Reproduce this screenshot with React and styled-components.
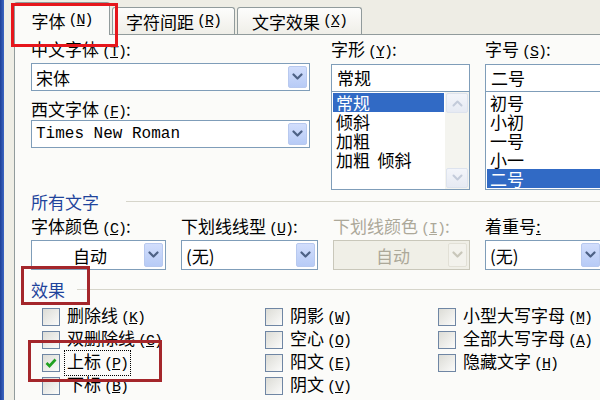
import React from 'react'
import styled, { createGlobalStyle } from 'styled-components'

const CJK = `"Noto Sans CJK SC", "Noto Sans CJK TC", sans-serif`

const GlobalStyle = createGlobalStyle`
  html, body { margin: 0; padding: 0; background: #eeede5; }
  body { font-family: ${CJK}; color: #000; }
  * { box-sizing: border-box; }
`

const Chevron = ({ up, color = '#4d6185', w = 2.2 }) => (
    <svg width="11" height="8" viewBox="0 0 11 8">
        <path d={up ? 'M1.5 6.5 L5.5 2.5 L9.5 6.5' : 'M1.5 1.5 L5.5 5.5 L9.5 1.5'}
            stroke={color} strokeWidth={w} fill="none" strokeLinecap="round" strokeLinejoin="round" />
    </svg>
)

const Mn = ({ k }) => <Key>(<u>{k}</u>)</Key>

function Combo({ value, center, mono, disabled, h = 28 }) {
    return (
        <ComboBox disabled={disabled} h={h}>
            <ComboText center={center} mono={mono} disabled={disabled}>{value}</ComboText>
            <DropBtn disabled={disabled}>
                <Chevron color={disabled ? '#c9c7ba' : '#4d6185'} />
            </DropBtn>
        </ComboBox>
    )
}

function ListPicker({ value, items, selected, scroll }) {
    return (
        <div>
            <InputBox>{value}</InputBox>
            <ListBox>
                <Items>
                    {items.map(it => (
                        <Item key={it} active={it === selected}>{it}</Item>
                    ))}
                </Items>
                {scroll && (
                    <ScrollBar>
                        <ScrollBtn><Chevron up color="#c3cbda" w={2} /></ScrollBtn>
                        <ScrollBtn><Chevron color="#c3cbda" w={2} /></ScrollBtn>
                    </ScrollBar>
                )}
            </ListBox>
        </div>
    )
}

function Check({ label, k, checked, focus, marked }) {
    return (
        <CheckRow>
            {marked && <Highlight dark style={{ left: -14, top: -11, width: 134, height: 42 }} />}
            <Box>
                {checked && (
                    <svg width="14" height="14" viewBox="0 0 14 14">
                        <path d="M2.5 7 L5.5 10 L11.5 3.5" stroke="#21a121" strokeWidth="2.6" fill="none" />
                    </svg>
                )}
            </Box>
            <CheckLabel focus={focus}>{label}<Mn k={k} /></CheckLabel>
        </CheckRow>
    )
}

export default function App() {
    return (
        <Window>
            <GlobalStyle />
            <BlueEdge />
            <Dialog>
                <TabStrip>
                    <Tab active w={96}>
                        字体<Mn k="N" />
                        <Highlight style={{ left: -4, top: 0, width: 107, height: 44 }} />
                    </Tab>
                    <Tab w={123}>字符间距<Mn k="R" /></Tab>
                    <Tab w={125}>文字效果<Mn k="X" /></Tab>
                </TabStrip>
                <Panel>
                    <TopGrid>
                        <LeftCol>
                            <Label>中文字体<Mn k="T" />:</Label>
                            <Gap h={3} />
                            <Combo value="宋体" />
                            <Gap h={7} />
                            <Label>西文字体<Mn k="F" />:</Label>
                            <Combo value="Times New Roman" mono />
                        </LeftCol>
                        <div>
                            <Label>字形<Mn k="Y" />:</Label>
                            <Gap h={4} />
                            <ListPicker value="常规" items={['常规', '倾斜', '加粗', '加粗  倾斜']} selected="常规" scroll />
                        </div>
                        <div>
                            <Label>字号<Mn k="S" />:</Label>
                            <Gap h={4} />
                            <ListPicker value="二号" items={['初号', '小初', '一号', '小一', '二号']} selected="二号" />
                        </div>
                    </TopGrid>

                    <SectionTitle line={27}>所有文字</SectionTitle>

                    <FieldGrid>
                        <Label>字体颜色<Mn k="C" />:</Label>
                        <Label>下划线线型<Mn k="U" />:</Label>
                        <Label disabled>下划线颜色<Mn k="I" />:</Label>
                        <Label>着重号<u>:</u></Label>
                        <Combo value="自动" center h={30} />
                        <Combo value="(无)" h={30} />
                        <Combo value="自动" center disabled h={30} />
                        <Combo value="(无)" h={30} />
                    </FieldGrid>

                    <SectionTitle line={12} top={8}>
                        效果
                        <Highlight dark style={{ left: -10, top: -12, width: 69, height: 39 }} />
                    </SectionTitle>

                    <CheckGrid>
                        <Check label="删除线" k="K" />
                        <Check label="双删除线" k="G" />
                        <Check label="上标" k="P" checked focus marked />
                        <Check label="下标" k="B" />
                        <Check label="阴影" k="W" />
                        <Check label="空心" k="O" />
                        <Check label="阳文" k="E" />
                        <Check label="阴文" k="V" />
                        <Check label="小型大写字母" k="M" />
                        <Check label="全部大写字母" k="A" />
                        <Check label="隐藏文字" k="H" />
                    </CheckGrid>
                </Panel>
            </Dialog>
        </Window>
    )
}

const Window = styled.div`
    width: 600px;
    height: 400px;
    overflow: hidden;
    display: flex;
`

const BlueEdge = styled.div`
    width: 4px;
    flex-shrink: 0;
    background: linear-gradient(to right, #1d3f97, #3c66c2);
`

const Dialog = styled.div`
    flex: 1;
    display: flex;
    flex-direction: column;
    padding-left: 10px;
    background: #eeede5;
    min-width: 0;
`

const TabStrip = styled.div`
    height: 34px;
    flex-shrink: 0;
    display: flex;
    align-items: flex-end;
    gap: 2px;
    position: relative;
    z-index: 2;
`

const Tab = styled.div`
    position: relative;
    width: ${p => p.w}px;
    height: ${p => (p.active ? 33 : 27)}px;
    margin-bottom: ${p => (p.active ? -1 : 0)}px;
    padding-top: ${p => (p.active ? 2 : 0)}px;
    border: 1px solid #919b9c;
    border-bottom: none;
    border-radius: 3px 3px 0 0;
    background: ${p => (p.active ? '#fbfbf9' : 'linear-gradient(#fdfdfc, #efeee8)')};
    display: flex;
    align-items: center;
    justify-content: center;
    font-size: 17px;
    white-space: nowrap;
`

const Highlight = styled.div`
    position: absolute;
    border: 3px solid ${p => (p.dark ? '#a4262b' : '#e6161c')};
    pointer-events: none;
    z-index: 5;
`

const Panel = styled.div`
    flex: 1;
    border-top: 1px solid #919b9c;
    border-left: 1px solid #919b9c;
    background: #fbfbf9;
    padding: 3px 0 0 16px;
    display: flex;
    flex-direction: column;
`

const Key = styled.span`
    font-family: "Liberation Mono", monospace;
    font-size: 15px;
    margin-left: 3px;
    letter-spacing: -1px;
`

const Label = styled.div`
    height: 22px;
    line-height: 22px;
    font-size: 17px;
    white-space: nowrap;
    color: ${p => (p.disabled ? '#aca899' : '#000')};
`

const Gap = styled.div`
    height: ${p => p.h}px;
`

const TopGrid = styled.div`
    display: grid;
    grid-template-columns: 285px 139px 118px;
    column-gap: 15px;
    height: 152px;
    flex-shrink: 0;
`

const LeftCol = styled.div`
    width: 279px;
`

const ComboBox = styled.div`
    height: ${p => p.h}px;
    display: flex;
    align-items: center;
    border: 1px solid ${p => (p.disabled ? '#c9c7ba' : '#7f9db9')};
    background: ${p => (p.disabled ? '#f0efe7' : '#fff')};
`

const ComboText = styled.div`
    flex: 1;
    padding-left: 4px;
    text-align: ${p => (p.center ? 'center' : 'left')};
    font-family: ${p => (p.mono ? '"Liberation Mono", monospace' : CJK)};
    font-size: ${p => (p.mono ? 16 : 17)}px;
    color: ${p => (p.disabled ? '#aca899' : '#000')};
    white-space: nowrap;
    overflow: hidden;
`

const DropBtn = styled.div`
    width: 19px;
    align-self: stretch;
    margin: 2px 2px 2px 0;
    border-radius: 2px;
    display: flex;
    align-items: center;
    justify-content: center;
    border: 1px solid ${p => (p.disabled ? '#e2e0d6' : '#b8c9ef')};
    background: ${p => (p.disabled ? '#f3f2ec' : 'linear-gradient(#d2defc, #b7cbf6)')};
`

const InputBox = styled.div`
    height: 28px;
    border: 1px solid #7f9db9;
    background: #fff;
    font-size: 17px;
    line-height: 26px;
    padding-left: 5px;
`

const ListBox = styled.div`
    height: 98px;
    display: flex;
    border: 1px solid #7f9db9;
    border-top: none;
    background: #fff;
`

const Items = styled.div`
    flex: 1;
    padding: 1px 1px 0 1px;
`

const Item = styled.div`
    height: 19px;
    line-height: 19px;
    font-size: 17px;
    padding-left: 3px;
    white-space: pre;
    background: ${p => (p.active ? '#316ac5' : 'transparent')};
    color: ${p => (p.active ? '#fff' : '#000')};
`

const ScrollBar = styled.div`
    width: 24px;
    display: flex;
    flex-direction: column;
    justify-content: space-between;
    padding: 1px;
    background: #f4f4ef;
`

const ScrollBtn = styled.div`
    height: 20px;
    border: 1px solid #dde3ee;
    border-radius: 2px;
    background: linear-gradient(#f3f5fa, #e6eaf3);
    display: flex;
    align-items: center;
    justify-content: center;
`

const SectionTitle = styled.div`
    position: relative;
    height: 22px;
    flex-shrink: 0;
    margin-top: ${p => p.top || 0}px;
    display: flex;
    align-items: center;
    font-size: 17px;
    color: #1f449c;

    &::after {
        content: '';
        flex: 1;
        height: 1px;
        margin-left: ${p => p.line}px;
        background: #d6d5cb;
    }
`

const FieldGrid = styled.div`
    margin-top: 3px;
    display: grid;
    grid-template-columns: 135px 137px 137px 118px;
    grid-template-rows: 22px 30px;
    column-gap: 15px;
    row-gap: 3px;
    flex-shrink: 0;
`

const CheckGrid = styled.div`
    margin: 5px 0 0 11px;
    display: grid;
    grid-template-columns: 223px 173px auto;
    grid-template-rows: repeat(4, 23px);
    grid-auto-flow: column;
    flex-shrink: 0;
`

const CheckRow = styled.div`
    position: relative;
    display: flex;
    align-items: center;
    gap: 5px;
    font-size: 17px;
    white-space: nowrap;
`

const Box = styled.div`
    width: 18px;
    height: 18px;
    border: 1px solid #6f86a4;
    background: linear-gradient(135deg, #dcdcd6, #fbfbfa);
    display: flex;
    align-items: center;
    justify-content: center;
`

const CheckLabel = styled.div`
    padding: 0 2px;
    line-height: 20px;
    outline: ${p => (p.focus ? '1px dotted #000' : 'none')};
`
